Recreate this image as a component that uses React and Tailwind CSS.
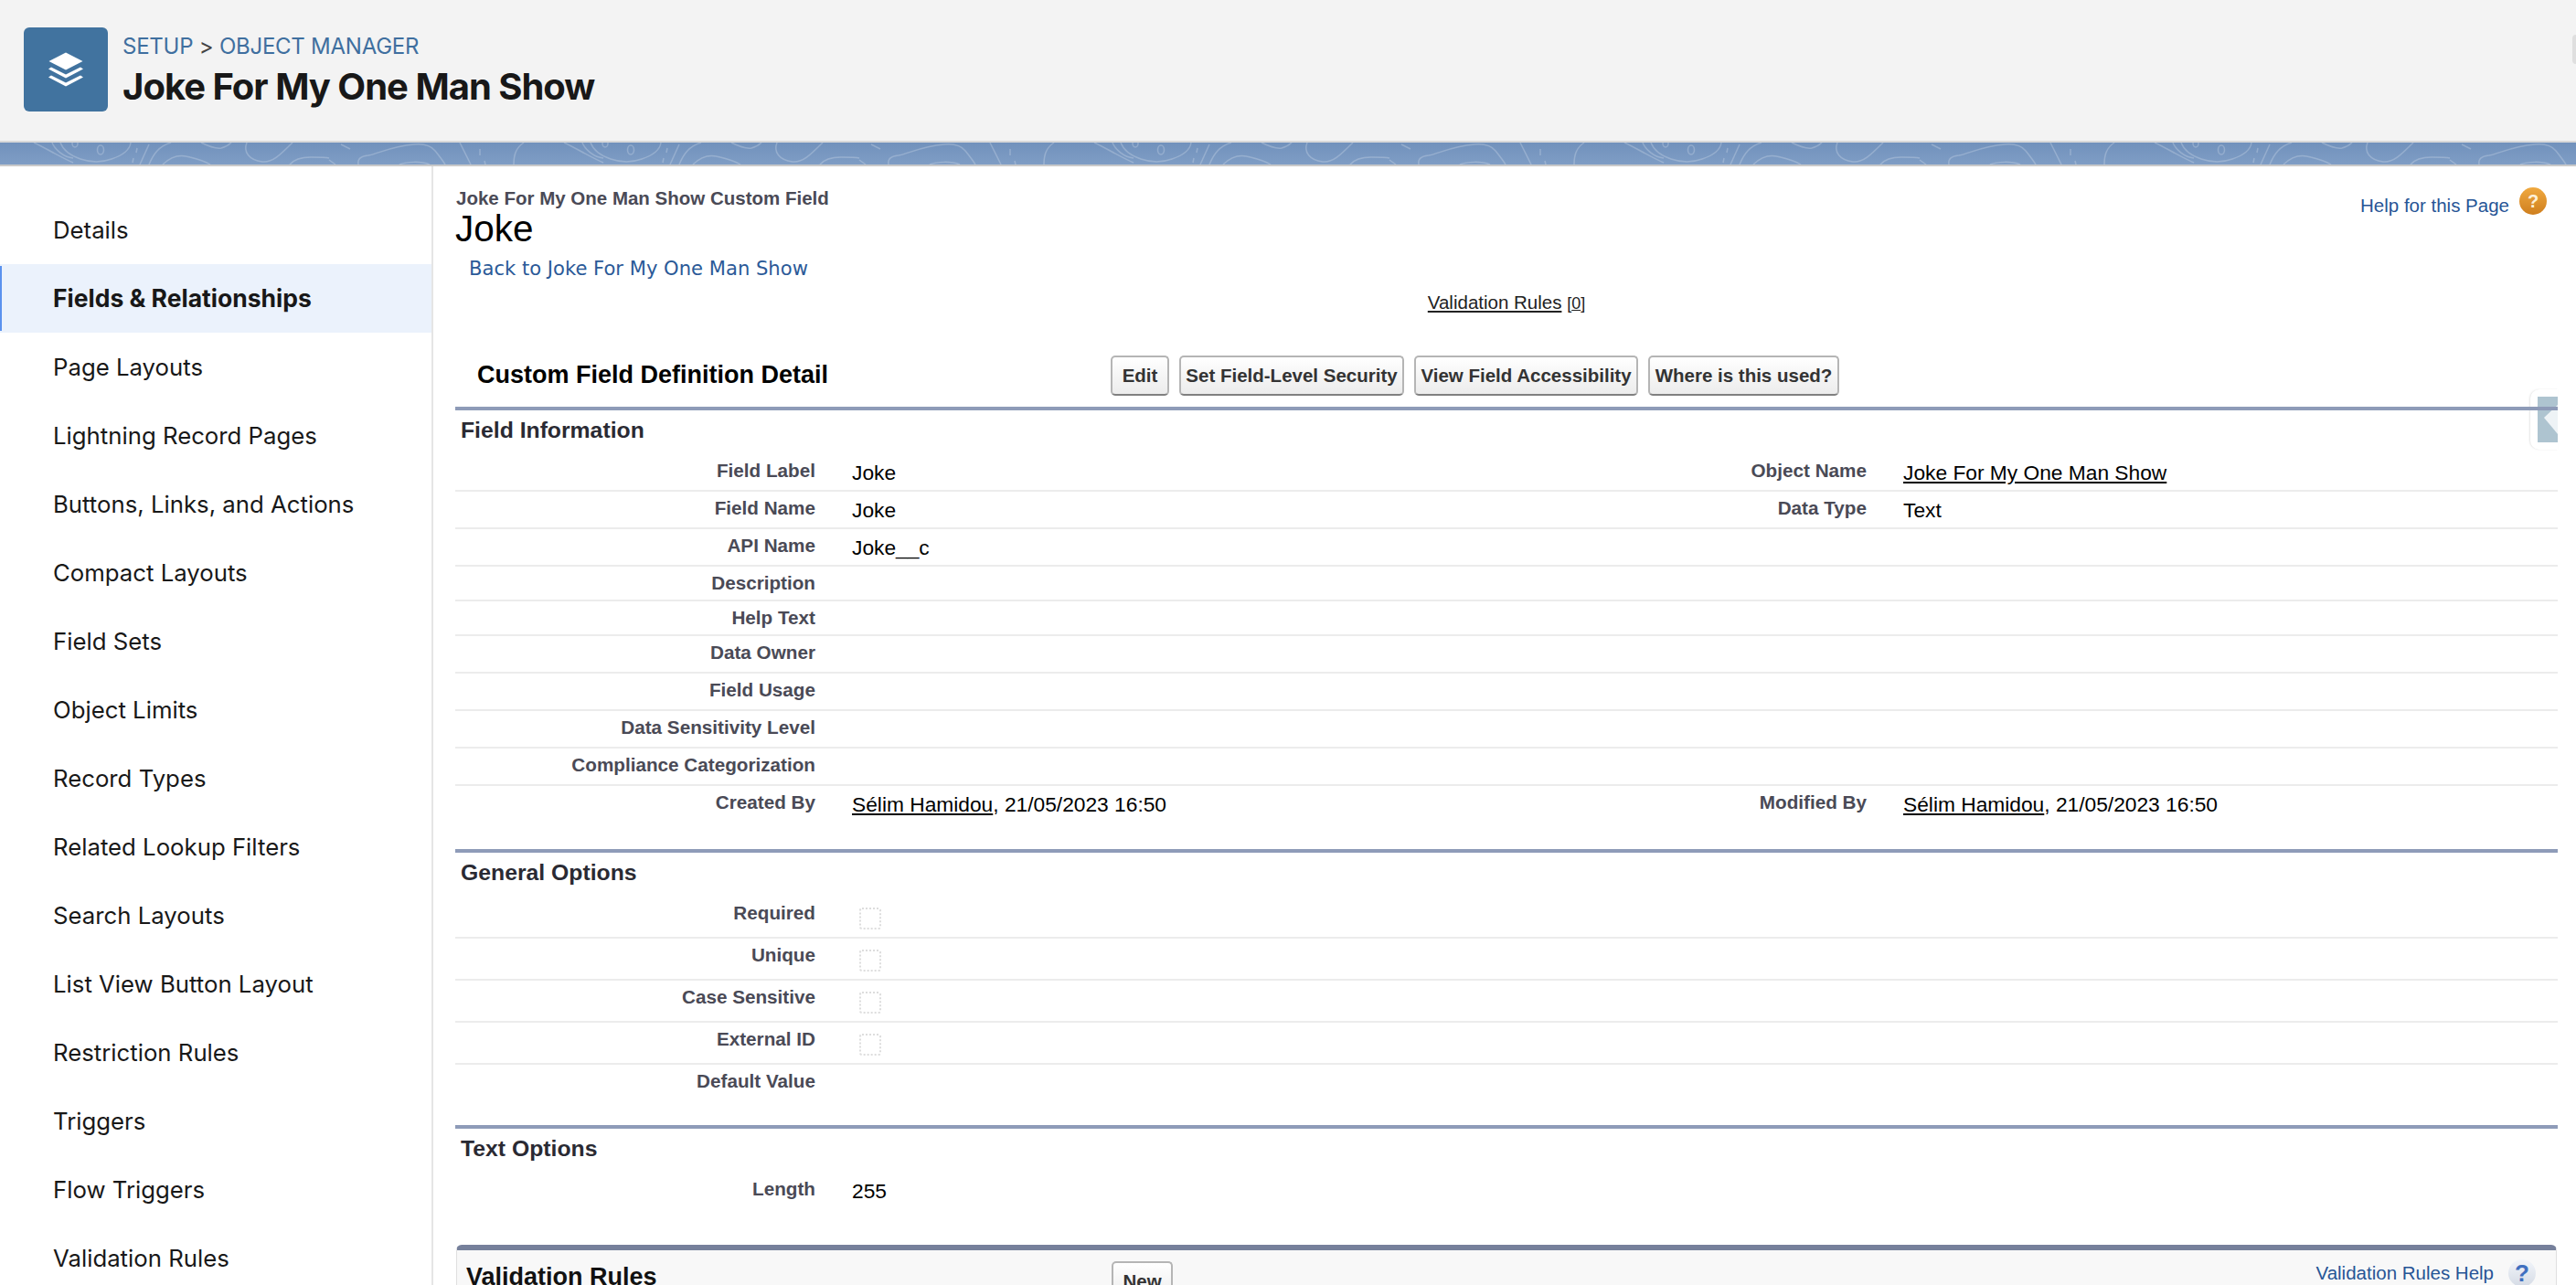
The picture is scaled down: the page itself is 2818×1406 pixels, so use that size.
import React from "react";

const sideItems = [
  "Details",
  "Fields & Relationships",
  "Page Layouts",
  "Lightning Record Pages",
  "Buttons, Links, and Actions",
  "Compact Layouts",
  "Field Sets",
  "Object Limits",
  "Record Types",
  "Related Lookup Filters",
  "Search Layouts",
  "List View Button Layout",
  "Restriction Rules",
  "Triggers",
  "Flow Triggers",
  "Validation Rules",
];

const Band = () => (
  <div className="relative h-[24px] bg-linear-to-b from-[#7191bc] to-[#7f9dc5]">
    <svg className="absolute inset-0 w-full h-full" aria-hidden="true">
      <defs>
        <pattern id="contour" x="60" y="-156" width="580" height="200" patternUnits="userSpaceOnUse">
          <g transform="translate(-60 0)" fill="none" stroke="#ffffff" strokeOpacity="0.22" strokeWidth="1.5">
            <path d="M66 156C72 172 100 182 122 174C134 170 142 164 143 156" />
            <ellipse cx="110" cy="164" rx="3.5" ry="5" />
            <ellipse cx="82" cy="157" rx="3" ry="4" />
            <path d="M150 162L149 167M146 173L145 178" />
            <path d="M153 180L163 158" />
            <path d="M163 180C168 168 174 160 187 156" />
            <path d="M178 180C186 172 196 168 208 172C216 174 224 176 230 180" />
            <path d="M220 156C228 160 236 163 242 162C246 161 250 159 253 156" />
            <path d="M270 156C266 166 272 175 287 177C298 178 306 170 320 156" />
            <path d="M317 180C322 174 330 172 340 172C350 172 356 172 360 173" />
            <path d="M373 158L383 163M360 175L367 180" />
            <path d="M392 180C391 174 394 171 403 170C414 168 428 160 453 158C464 157 472 160 476 165C480 170 484 175 487 180" />
            <path d="M437 180C445 177 460 176 470 180" />
            <path d="M503 156L515 180" />
            <path d="M525 163L525 170M530 176L531 180" />
            <path d="M562 180C562 170 564 162 573 156" />
            <path d="M617 156C630 162 646 172 660 178" />
            <path d="M637 156C640 164 650 172 660 173" />
            <path d="M37 156C50 162 66 172 80 178" />
            <path d="M57 156C60 164 70 172 80 173" />
          </g>
        </pattern>
      </defs>
      <rect width="100%" height="100%" fill="url(#contour)" />
    </svg>
  </div>
);

const Header = () => (
  <div className="relative h-[154px] bg-[#f3f3f3] flex items-start pl-[26px] pt-[30px]">
    <div className="w-[92px] h-[92px] rounded-[6px] bg-[#41739f] flex items-center justify-center">
      <svg width="38" height="38" viewBox="0 0 38 38" fill="#ffffff" aria-hidden="true">
        <path d="M19 0.5L37.5 10L19 19.5L0.5 10Z" />
        <path d="M3 16.5L19 24.5L35 16.5L38 18.5L19 28.5L0 18.5Z" />
        <path d="M3 25.5L19 33.5L35 25.5L38 27.5L19 37.5L0 27.5Z" />
      </svg>
    </div>
    <div className="ml-[16px] font-['Inter',sans-serif]">
      <div className="mt-[6px] h-[30px] leading-[30px] text-[24px] tracking-[-0.25px] text-[#3f6f9f]">
        SETUP <span className="text-[#444444]">&gt;</span> OBJECT MANAGER
      </div>
      <div className="mt-[4px] h-[50px] leading-[50px] text-[40px] font-bold text-[#181818] tracking-[-1px]">
        Joke For My One Man Show
      </div>
    </div>
    <div className="absolute right-0 top-[38px] w-[4px] h-[32px] rounded-l-[4px] bg-[#dfdfdf]"></div>
  </div>
);

const Sidebar = () => (
  <div className="w-[474px] shrink-0 border-r-2 border-[#e5e5e5] pt-[32px] font-['Inter',sans-serif] text-[25.75px] text-[#181818]">
    {sideItems.map((item) =>
      item === "Fields & Relationships" ? (
        <div key={item} className="relative h-[75px] flex items-center pl-[58px] bg-[#ebf2fc] text-[26.5px] font-bold">
          <div className="absolute left-0 top-[2px] bottom-[2px] w-[2px] bg-[#5a92ee]"></div>
          {item}
        </div>
      ) : (
        <div key={item} className="h-[75px] flex items-center pl-[58px] pt-[1px]">
          {item}
        </div>
      )
    )}
  </div>
);

const Btn = ({ children, className }) => (
  <button className={"h-[44px] px-[4px] rounded-[5px] border-2 border-[#b5b5b5] border-b-[#808080] bg-linear-to-b from-[#ffffff] to-[#ececec] text-[20.5px] font-bold leading-none text-[#333333] whitespace-nowrap " + (className || "")}>
    {children}
  </button>
);

const SectionHead = ({ children }) => (
  <>
    <div className="relative z-10 h-[4px] bg-[#8e9bb8]"></div>
    <div className="h-[48px] pt-[7px] pl-[6px] text-[24.75px] leading-[30px] font-bold text-[#2a2a33]">{children}</div>
  </>
);

const Row = ({ h, label, value, label2, value2, last, children }) => (
  <div className={"grid grid-cols-[394px_759px_391px_1fr] " + h + (last ? "" : " border-b-2 border-[#ececec]")}>
    <div className="pt-[6px] leading-[24px] text-[20.7px] font-bold text-[#4a4a56] text-right">{label}</div>
    <div className="pt-[7.5px] pl-10 leading-[24px] text-[22.75px] text-black">{children || value}</div>
    <div className="pt-[6px] leading-[24px] text-[20.7px] font-bold text-[#4a4a56] text-right">{label2}</div>
    <div className="pt-[7.5px] pl-10 leading-[24px] text-[22.75px] text-black">{value2}</div>
  </div>
);

const Check = () => (
  <div className="ml-[8px] mt-[4.5px] w-[24px] h-[24px] rounded-[3px] border-2 border-dotted border-[#dddddd]"></div>
);

const Content = () => (
  <div className="relative flex-1 pl-[24px] pr-[20px] pt-[24px] font-['Liberation_Sans',Arial,sans-serif]">
    <div className="absolute right-[32px] top-[23px] flex items-start">
      <a className="pt-[5px] text-[20.5px] text-[#275596]">Help for this Page</a>
      <div className="ml-[11px] w-[30px] h-[30px] rounded-full bg-linear-to-b from-[#f0a93f] to-[#cf7f1e] flex items-center justify-center text-[20px] font-bold leading-none text-[#fdf1d8]">?</div>
    </div>
    <div className="absolute right-[20px] top-[244px] w-[30px] h-[66px] rounded-l-[10px] bg-white shadow-[-1px_0_2px_rgba(0,0,0,0.1)] pl-[8px] py-[8px]">
      <div className="h-full bg-[#aec4d0] flex items-center justify-end">
        <svg width="15" height="32" viewBox="0 0 15 32" aria-hidden="true">
          <path d="M15 0V32L0 14Z" fill="#eef3f6" />
        </svg>
      </div>
    </div>

    <div className="h-[22px] pl-[1px] leading-[22px] text-[20.5px] font-bold text-[#4a4a56]">Joke For My One Man Show Custom Field</div>
    <div className="h-[44px] leading-[44px] text-[40.5px] text-black">Joke</div>
    <div className="mt-[7px] h-[30px] pl-[15px] leading-[30px] text-[21.1px] text-[#2b5a98] font-['DejaVu_Sans',sans-serif]">
      Back to Joke For My One Man Show
    </div>
    <div className="mt-[10px] h-[24px] leading-[24px] text-center text-[20.5px] text-[#222222]">
      <span className="underline">Validation Rules</span> <span className="text-[18px]">[<span className="underline">0</span>]</span>
    </div>

    <div className="mt-[46px] h-[44px] flex items-center">
      <div className="w-[717px] pl-[24px] pb-[2px] text-[27px] font-bold text-black">Custom Field Definition Detail</div>
      <div className="flex gap-[11px]">
        <Btn className="w-[64px]">Edit</Btn>
        <Btn className="w-[246px]">Set Field-Level Security</Btn>
        <Btn className="w-[245px]">View Field Accessibility</Btn>
        <Btn className="w-[209px]">Where is this used?</Btn>
      </div>
    </div>

    <div className="mt-[12px]">
      <SectionHead>Field Information</SectionHead>
      <Row h="h-[41px]" label="Field Label" value="Joke" label2="Object Name" value2={<span className="underline">Joke For My One Man Show</span>} />
      <Row h="h-[41px]" label="Field Name" value="Joke" label2="Data Type" value2="Text" />
      <Row h="h-[41px]" label="API Name" value="Joke__c" />
      <Row h="h-[38px]" label="Description" />
      <Row h="h-[38px]" label="Help Text" />
      <Row h="h-[41px]" label="Data Owner" />
      <Row h="h-[41px]" label="Field Usage" />
      <Row h="h-[41px]" label="Data Sensitivity Level" />
      <Row h="h-[41px]" label="Compliance Categorization" />
      <Row
        h="h-[69px]"
        last
        label="Created By"
        value={<><span className="underline">Sélim Hamidou</span>, 21/05/2023 16:50</>}
        label2="Modified By"
        value2={<><span className="underline">Sélim Hamidou</span>, 21/05/2023 16:50</>}
      />

      <SectionHead>General Options</SectionHead>
      <Row h="h-[46px]" label="Required"><Check /></Row>
      <Row h="h-[46px]" label="Unique"><Check /></Row>
      <Row h="h-[46px]" label="Case Sensitive"><Check /></Row>
      <Row h="h-[46px]" label="External ID"><Check /></Row>
      <Row h="h-[66px]" last label="Default Value" />

      <SectionHead>Text Options</SectionHead>
      <Row h="h-[79px]" last label="Length" value="255" />
    </div>

    <div className="ml-[1px] mr-[1px] h-[120px] rounded-t-[6px] border-t-[6px] border-x border-t-[#76809b] border-x-[#e0e0e0] bg-[#f8f8f8] flex items-start">
      <div className="w-[716px] pl-[10px] pt-[12px] text-[27px] leading-[34px] font-bold text-[#111111]">Validation Rules</div>
      <Btn className="mt-[12px] w-[67px]">New</Btn>
      <div className="ml-auto mr-[22px] mt-[10px] flex items-center">
        <a className="text-[20.5px] text-[#275596]">Validation Rules Help</a>
        <div className="ml-[16px] w-[30px] h-[30px] rounded-full bg-linear-to-b from-[#f2f5fa] to-[#d5dbe5] flex items-center justify-center text-[26px] font-bold leading-none text-[#3f6fc0]">?</div>
      </div>
    </div>
  </div>
);

export default function App() {
  return (
    <div className="w-full h-screen overflow-hidden bg-white">
      <Header />
      <div className="border-y-2 border-t-[#d9d9d9] border-b-[#c9c9c9]">
        <Band />
      </div>
      <div className="flex">
        <Sidebar />
        <Content />
      </div>
    </div>
  );
}
